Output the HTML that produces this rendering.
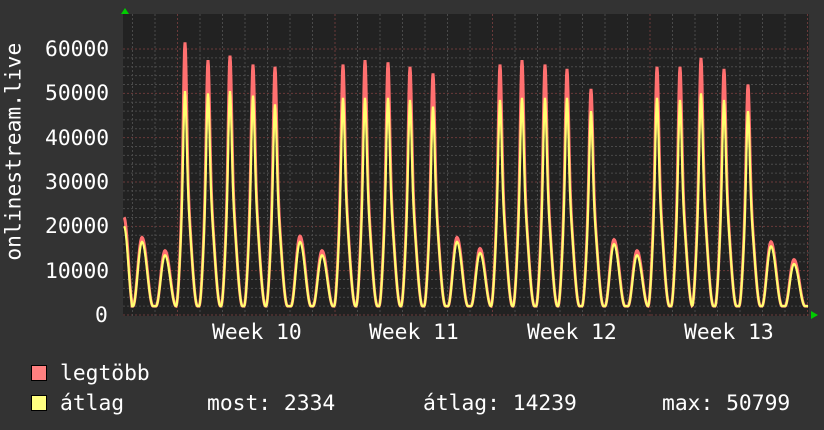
<!DOCTYPE html>
<html><head><meta charset="utf-8"><style>
html,body{margin:0;padding:0;background:#333;}
body{width:824px;height:430px;overflow:hidden;position:relative;font-family:"DejaVu Sans Mono","Liberation Mono",monospace;color:#fff;}
.t{position:absolute;font-size:21.3px;white-space:pre;line-height:1;}
.sq{position:absolute;width:14px;height:14px;border:1px solid #000;}
</style></head><body>
<svg id="g" width="824" height="430" style="position:absolute;left:0;top:0">
<rect x="123" y="14" width="686" height="302" fill="#222"/>
<g id="grid"></g>
<g id="data"></g>
<polygon points="121,14 129,14 125,8" fill="#0c0"/>
<polygon points="811,311 811,319 818,315" fill="#0c0"/>
</svg>
<div class="t" style="left:45px;top:39px">60000</div>
<div class="t" style="left:45px;top:83px">50000</div>
<div class="t" style="left:45px;top:128px">40000</div>
<div class="t" style="left:45px;top:172px">30000</div>
<div class="t" style="left:45px;top:216px">20000</div>
<div class="t" style="left:45px;top:261px">10000</div>
<div class="t" style="left:95px;top:305px">0</div>
<div class="t" style="left:-81px;top:155px;transform:rotate(-90deg);width:190px;text-align:center">onlinestream.live</div>
<div class="t" style="left:212px;top:322px">Week 10</div>
<div class="t" style="left:369px;top:322px">Week 11</div>
<div class="t" style="left:527px;top:322px">Week 12</div>
<div class="t" style="left:684px;top:322px">Week 13</div>
<div class="sq" style="left:31px;top:365px;background:#ff8080"></div>
<div class="sq" style="left:31px;top:395px;background:#ffff80"></div>
<div class="t" style="left:60px;top:363px">legtöbb</div>
<div class="t" style="left:60px;top:393px">átlag</div>
<div class="t" style="left:207px;top:393px">most: 2334</div>
<div class="t" style="left:423px;top:393px">átlag: 14239</div>
<div class="t" style="left:662px;top:393px">max: 50799</div>
<script>
function Y(v){return 315-v*266/60000;}
var grid=document.getElementById('grid'),s='';
for(var v=0;v<=60000;v+=2000){var y=Y(v);var maj=v%10000==0;
s+='<line x1="123" x2="809" y1="'+y+'" y2="'+y+'" stroke="'+(maj?'#6a3a3a':'#4a4a4a')+'" stroke-dasharray="2,2" stroke-width="1"/>';}
for(var x=132.5;x<809;x+=22.5){var maj=Math.abs(((x-177.5)%157.5+157.5)%157.5)<1;
s+='<line y1="14" y2="316" x1="'+x+'" x2="'+x+'" stroke="'+(maj?'#6a3a3a':'#4a4a4a')+'" stroke-dasharray="2,2" stroke-width="1"/>';}
grid.innerHTML=s;
var pk=[[142,17500,16500],[165,14500,13500],[185,61500,50500],[208,57500,50000],[230,58500,50500],[253,56500,49500],[275,56000,47500],[300,17800,16500],[322,14500,13500],[343,56500,49000],[365,57500,49000],[388,57000,49000],[410,56000,48500],[433,54500,47000],[457,17500,16500],[480,15000,14000],[500,56500,48500],[522,57500,49000],[545,56500,49000],[567,55500,49000],[591,51000,46000],[614,17000,16000],[637,14500,13500],[657,56000,49000],[680,56000,48500],[701,58000,50000],[724,55500,48500],[748,52000,46000],[771,16500,15500],[794,12500,11500]];
function bell(t,W){if(Math.abs(t)>=W)return 0;return 0.5*(1+Math.cos(Math.PI*t/W));}
function val(x,red){var m=2000,best=m;
 if(x<132){best=Math.max(best,m+(red?20000:18000)*bell(x-124,9));}
 for(var i=0;i<pk.length;i++){var c=pk[i][0],P=pk[i][1],A=pk[i][2],t=x-c,v;
  var wk=P<30000;
  if(wk){var H=(red?P:A)-m; v=m+H*bell(t,t<0?9:11);}
  else{ var H=A-m;
   v=m+H*(0.55*bell(t,t<0?9:12.5)+0.45*Math.exp(-t*t/(2*1.6*1.6)));
   if(red)v+=(P-A-1500)*Math.exp(-t*t/(2*1.6*1.6))+1500*bell(t,9);}
  best=Math.max(best,v);}
 return best;}
var pr='',py='';
for(var x=124;x<=808;x+=0.5){pr+=(pr?'L':'M')+x+','+Y(val(x,1)).toFixed(1);py+=(py?'L':'M')+x+','+Y(val(x,0)).toFixed(1);}
document.getElementById('data').innerHTML='<path d="'+pr+'" fill="none" stroke="#ff7070" stroke-width="3"/><path d="'+py+'" fill="none" stroke="#ffff70" stroke-width="2.2"/>';
</script>
</body></html>
